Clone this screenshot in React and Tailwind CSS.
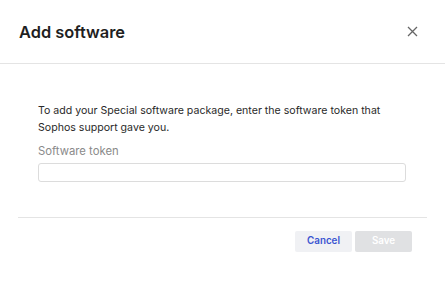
export default function App() {
  return (
    <div className="w-[445px] h-[286px] bg-white overflow-hidden flex flex-col" style={{ fontFamily: "Inter, 'Noto Sans', sans-serif" }}>
      <div className="h-[64px] flex items-center justify-between pl-[19px] pr-[27px] border-b border-[#e4e4e4] shrink-0">
        <h1 className="text-[16.4px] font-semibold text-[#1f1f1f] pt-[1px]">Add software</h1>
        <svg width="11" height="11" viewBox="0 0 11 11" className="text-[#666]">
          <path d="M1 1L10 10M10 1L1 10" stroke="currentColor" strokeWidth="1.3" />
        </svg>
      </div>
      <div className="px-[38px] pt-[39px]">
        <p className="text-[10.6px] leading-[16.5px] text-[#2a2a2a]">
          To add your Special software package, enter the software token that Sophos support gave you.
        </p>
        <label className="block mt-[8px] text-[11.3px] leading-[15px] text-[#8a8a8a]">Software token</label>
        <div className="mt-[4px] h-[19px] w-[368px] border border-[#dcdcdc] rounded-[3px]" />
      </div>
      <div className="mx-[18px] mt-[35px] border-t border-[#e4e4e4]" />
      <div className="flex justify-end gap-[3px] pr-[33px] mt-[13px]">
        <button className="w-[57px] h-[21px] rounded-[2px] bg-[#f0f1f4] text-[9.8px] font-semibold text-[#3b55d1]">Cancel</button>
        <button className="w-[57px] h-[21px] rounded-[2px] bg-[#e0e1e3] text-[9.8px] font-semibold text-white">Save</button>
      </div>
    </div>
  );
}
